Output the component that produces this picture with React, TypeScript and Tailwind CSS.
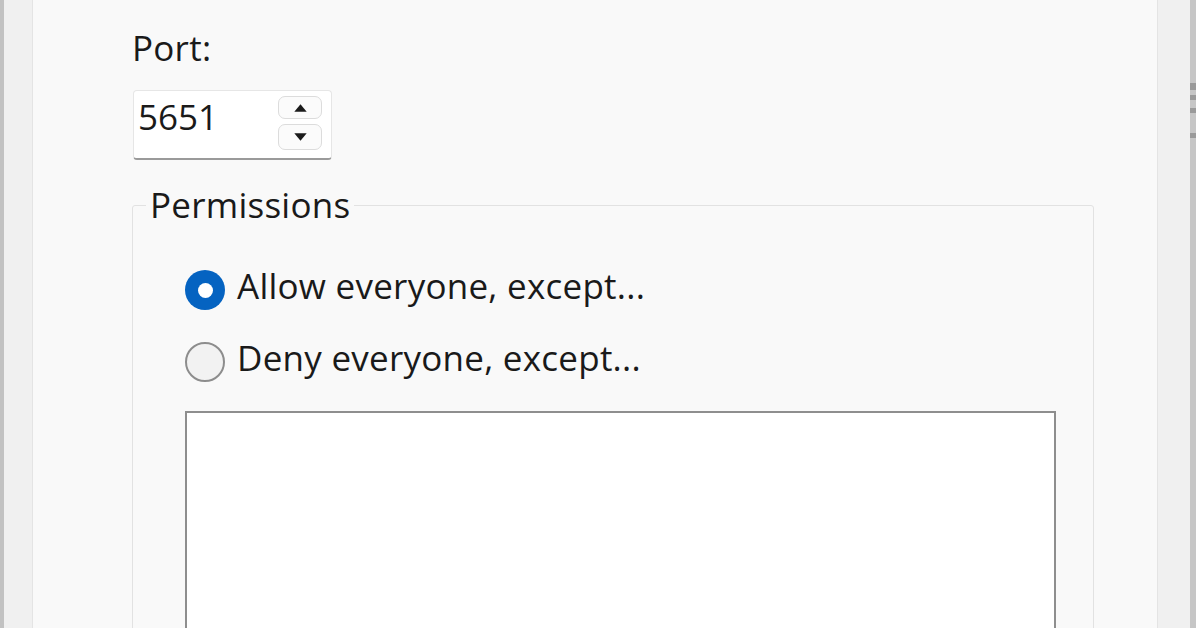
const font = { fontFamily: '"Open Sans", "Noto Sans", Arial, sans-serif' };

function SpinButton({ dir, tall }: { dir: "up" | "down"; tall?: boolean }) {
  return (
    <div
      className={
        tall
          ? "w-[44px] h-[26px] rounded-[7px] border border-[#dcdcdc] bg-[#fbfbfb] flex items-center justify-center"
          : "w-[44px] h-[23px] rounded-[7px] border border-[#dcdcdc] bg-[#fbfbfb] flex items-center justify-center"
      }
    >
      <svg width="13" height="8" viewBox="0 0 13 8" aria-hidden="true">
        {dir === "up" ? (
          <path d="M6.5 0.3 L12.7 7.7 L0.3 7.7 Z" fill="#1b1b1b" />
        ) : (
          <path d="M0.3 0.3 L12.7 0.3 L6.5 7.7 Z" fill="#1b1b1b" />
        )}
      </svg>
    </div>
  );
}

function Radio({ checked, label }: { checked?: boolean; label: string }) {
  return (
    <div className="flex items-start h-[40px]">
      {checked ? (
        <div className="mt-[4px] w-[40px] h-[40px] rounded-full bg-[#0563c1] flex items-center justify-center shrink-0">
          <div className="w-[15px] h-[15px] rounded-full bg-white" />
        </div>
      ) : (
        <div className="mt-[4px] w-[40px] h-[40px] rounded-full border-2 border-[#8d8d8d] bg-[#f2f2f2] shrink-0" />
      )}
      <span className="ml-[12px] text-[35px] leading-[40px] tracking-[0.25px] font-medium text-[#1a1a1a] whitespace-nowrap">
        {label}
      </span>
    </div>
  );
}

export default function App() {
  return (
    <div className="w-[1196px] h-[628px] overflow-hidden flex bg-[#f0f0f0]" style={font}>
      {/* left window edge */}
      <div className="w-[4px] bg-[#c2c2c2]" />
      <div className="w-[28px] bg-[#f0f0f0]" />

      {/* dialog page */}
      <div className="w-[1126px] bg-[#f9f9f9] border-x border-[#e4e4e4] flex flex-col">
        <div className="h-[3px] w-[290px] ml-[32px] bg-[#ebebeb]" />

        <div className="pl-[99px] flex flex-col">
          <div className="mt-[28px] text-[35px] leading-[40px] tracking-[0.25px] font-medium text-[#1a1a1a]">Port:</div>

          {/* spin box */}
          <div className="mt-[22px] ml-[1px] w-[199px] h-[70px] bg-white border border-[#e6e6e6] border-b-2 border-b-[#9a9a9a] rounded-[4px] flex items-start">
            <span className="pl-[4px] pt-[6px] flex-1 text-[35px] leading-[40px] font-medium text-[#1a1a1a]">5651</span>
            <div className="flex flex-col gap-[5px] pr-[9px] pt-[5px]">
              <SpinButton dir="up" />
              <SpinButton dir="down" tall />
            </div>
          </div>

          {/* permissions group */}
          <fieldset className="mt-[25px] w-[962px] h-[600px] border border-[#e2e2e2] rounded-[3px]">
            <legend className="ml-[13px] px-[4px] text-[35px] leading-[40px] tracking-[0.25px] font-medium text-[#1a1a1a]">
              Permissions
            </legend>
            <div className="pl-[52px] pt-[41px] flex flex-col gap-[32px]">
              <Radio checked label="Allow everyone, except..." />
              <Radio label="Deny everyone, except..." />
            </div>
            <div className="ml-[52px] mt-[33px] w-[871px] h-[300px] bg-white border-2 border-[#8e8e8e]" />
          </fieldset>
        </div>
      </div>

      {/* right side */}
      <div className="w-[32px] bg-[#f0f0f0]" />
      <div className="w-[6px] bg-[#c6c6c6] flex flex-col">
        <div className="mt-[83px] h-[7px] bg-[#9a9a9a]" />
        <div className="mt-[5px] h-[5px] bg-[#9a9a9a]" />
        <div className="mt-[8px] h-[5px] bg-[#9a9a9a]" />
        <div className="mt-[20px] h-[5px] bg-[#9a9a9a]" />
      </div>
    </div>
  );
}
